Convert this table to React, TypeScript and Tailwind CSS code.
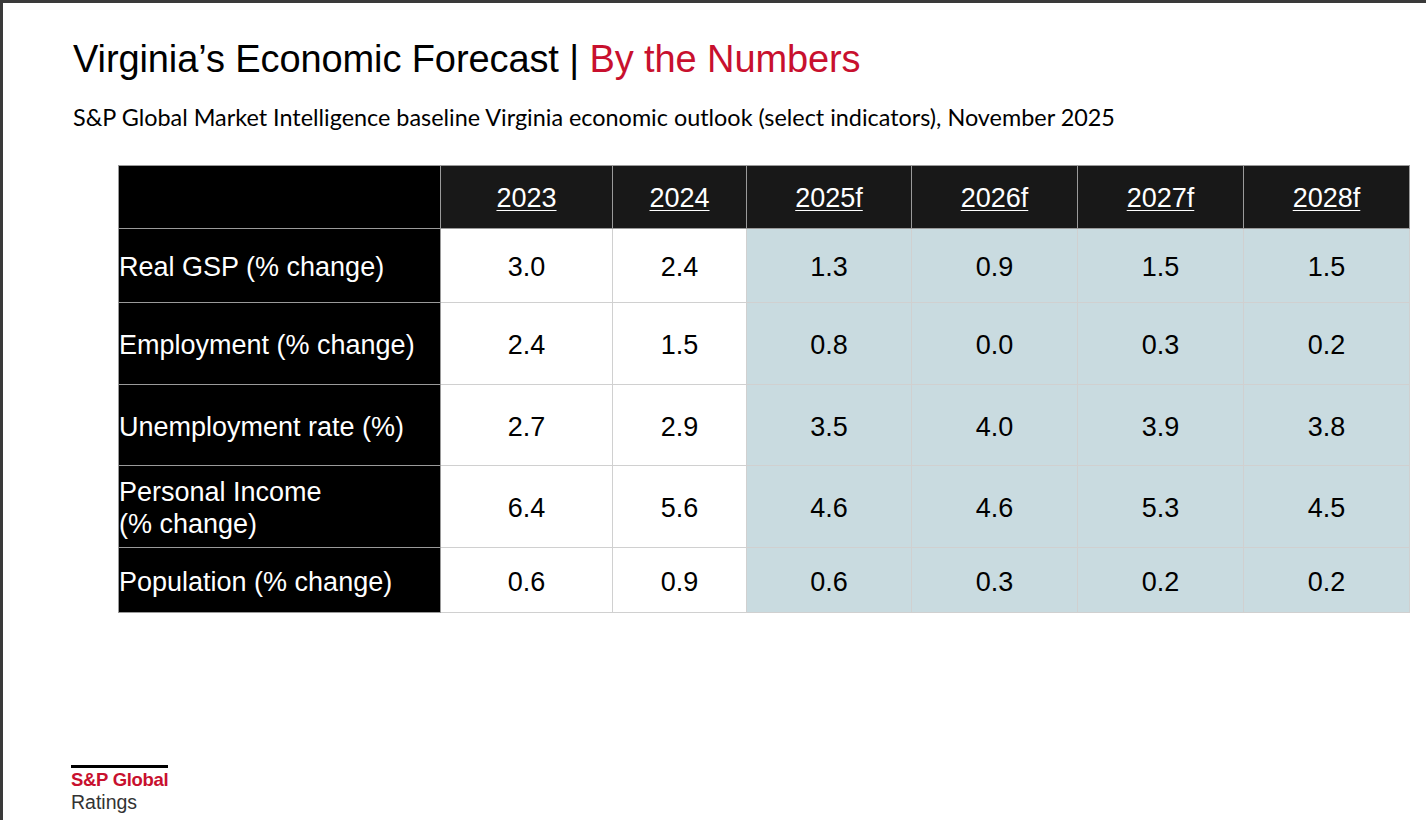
const years = [
  { label: "2023", forecast: false, w: "w-[172px]" },
  { label: "2024", forecast: false, w: "w-[134px]" },
  { label: "2025f", forecast: true, w: "w-[165px]" },
  { label: "2026f", forecast: true, w: "w-[166px]" },
  { label: "2027f", forecast: true, w: "w-[166px]" },
  { label: "2028f", forecast: true, w: "w-[166px]" },
];

const rows = [
  { name: "Real GSP (% change)", h: "h-[74px]", values: ["3.0", "2.4", "1.3", "0.9", "1.5", "1.5"] },
  { name: "Employment (% change)", h: "h-[82px]", values: ["2.4", "1.5", "0.8", "0.0", "0.3", "0.2"] },
  { name: "Unemployment rate (%)", h: "h-[81px]", values: ["2.7", "2.9", "3.5", "4.0", "3.9", "3.8"] },
  { name: "Personal Income\n(% change)", h: "h-[82px]", values: ["6.4", "5.6", "4.6", "4.6", "5.3", "4.5"] },
  { name: "Population (% change)", h: "h-[65px]", values: ["0.6", "0.9", "0.6", "0.3", "0.2", "0.2"] },
];

export default function App() {
  return (
    <div className="w-[1426px] h-[820px] bg-white border-t-[3px] border-l-[3px] border-[#3a3a3a] flex flex-col font-['Liberation_Sans',Arial,sans-serif] overflow-hidden">
      {/* Heading */}
      <div className="pl-[70px] pt-[34px]">
        <h1 className="text-[38px] leading-[44px] text-black tracking-[-0.1px]">
          Virginia’s Economic Forecast | <span className="text-[#c8102e]">By the Numbers</span>
        </h1>
        <p className="mt-[23px] text-[23.4px] leading-[26px] text-black font-['Lato','Open_Sans',sans-serif]">
          S&amp;P Global Market Intelligence baseline Virginia economic outlook (select indicators), November 2025
        </p>
      </div>

      {/* Table */}
      <div className="pl-[115px] pt-[35px]">
        <table className="border-collapse table-fixed text-[27px] leading-[32px]">
          <thead>
            <tr className="h-[63px]">
              <th className="w-[322px] bg-black border border-[#9a9a9a]" />
              {years.map((y) => (
                <th key={y.label} className={`${y.w} bg-[#181818] border border-[#9a9a9a] text-white font-normal text-center pt-[2px]`}>
                  <span className="underline decoration-1 underline-offset-[3px]">{y.label}</span>
                </th>
              ))}
            </tr>
          </thead>
          <tbody>
            {rows.map((r) => (
              <tr key={r.name} className={r.h}>
                <td className="bg-black border border-[#9a9a9a] text-white whitespace-pre-line align-middle pt-[3px]">{r.name}</td>
                {r.values.map((v, i) => (
                  <td
                    key={i}
                    className={`border border-[#d0d0d0] text-center text-black pt-[3px] ${years[i].forecast ? "bg-[#c9dbe0]" : "bg-white"}`}
                  >
                    {v}
                  </td>
                ))}
              </tr>
            ))}
          </tbody>
        </table>
      </div>

      {/* Logo */}
      <div className="mt-auto pl-[68px] pb-[6px]">
        <div className="w-[97px] border-t-[3px] border-black pt-[2px]">
          <div className="text-[18.5px] leading-[20px] font-bold text-[#c8102e] tracking-[-0.3px] whitespace-nowrap">S&amp;P Global</div>
          <div className="text-[19.5px] leading-[24px] text-[#333] whitespace-nowrap">Ratings</div>
        </div>
      </div>
    </div>
  );
}
